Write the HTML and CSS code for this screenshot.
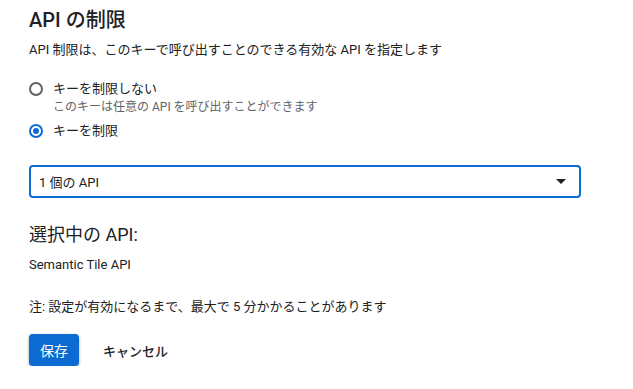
FILE: index.html
```html
<!DOCTYPE html>
<html lang="ja">
<head>
  <meta charset="UTF-8" />
  <meta name="viewport" content="width=device-width, initial-scale=1" />
  <title>API の制限</title>
  <link rel="stylesheet" href="styles.css">
</head>
<body>

  <div class="panel">
    <h1 class="title">API の制限</h1>
    <p class="desc">API 制限は、このキーで呼び出すことのできる有効な API を指定します</p>

    <div class="radio-group">
      <label class="radio">
        <span class="radio-dot"></span>
        <span class="radio-label">キーを制限しない</span>
      </label>
      <div class="radio-hint">このキーは任意の API を呼び出すことができます</div>
      <label class="radio checked">
        <span class="radio-dot"></span>
        <span class="radio-label">キーを制限</span>
      </label>
    </div>

    <div class="select">
      <span class="select-value">1 個の API</span>
      <span class="select-arrow"></span>
    </div>

    <h2 class="subtitle">選択中の API:</h2>
    <p class="api-name">Semantic Tile API</p>

    <p class="note">注: 設定が有効になるまで、最大で 5 分かかることがあります</p>

    <div class="actions">
      <button class="btn-save">保存</button>
      <button class="btn-cancel">キャンセル</button>
    </div>
  </div>

</body>
</html>
```

FILE: styles.css
```css
* {
  margin: 0;
  padding: 0;
  box-sizing: border-box;
}

html, body {
  background: #fff;
  font-family: Roboto, "Noto Sans CJK JP", sans-serif;
  color: #202124;
}

.panel {
  padding: 8px 0 0 29px;
  width: 581px;
}

.title {
  font-size: 20px;
  font-weight: 500;
  line-height: 24px;
}

.desc {
  margin-top: 8px;
  font-size: 13px;
  line-height: 20px;
}

.radio-group {
  margin-top: 19px;
  display: flex;
  flex-direction: column;
}

.radio {
  display: flex;
  align-items: center;
  gap: 10px;
  font-size: 13px;
  line-height: 20px;
}

.radio-dot {
  width: 14px;
  height: 14px;
  border: 2px solid #5f6368;
  border-radius: 50%;
  position: relative;
}

.radio.checked {
  margin-top: 6px;
}

.radio.checked .radio-dot {
  border-color: #0b6bd3;
}

.radio.checked .radio-dot::after {
  content: "";
  position: absolute;
  top: 2px;
  left: 2px;
  width: 6px;
  height: 6px;
  border-radius: 50%;
  background: #0b6bd3;
}

.radio-hint {
  padding-left: 24px;
  font-size: 12px;
  line-height: 16px;
  color: #5f6368;
}

.select {
  margin-top: 24px;
  height: 33px;
  border: 2px solid #0b6bd3;
  border-radius: 4px;
  display: flex;
  align-items: center;
  justify-content: space-between;
  padding: 0 13px 0 8px;
  font-size: 13px;
}

.select-arrow {
  width: 0;
  height: 0;
  border-left: 5px solid transparent;
  border-right: 5px solid transparent;
  border-top: 5px solid #202124;
}

.subtitle {
  margin-top: 25px;
  font-size: 18px;
  font-weight: 400;
  line-height: 24px;
}

.api-name {
  margin-top: 8px;
  font-size: 13px;
  line-height: 20px;
}

.note {
  margin-top: 22px;
  font-size: 13px;
  line-height: 20px;
}

.actions {
  margin-top: 17px;
  display: flex;
  align-items: center;
  gap: 16px;
}

.btn-save {
  height: 32px;
  padding: 0 11px;
  border: none;
  border-radius: 4px;
  background: #0b6bd3;
  color: #fff;
  font-family: inherit;
  font-size: 14px;
  box-shadow: 0 1px 2px rgba(60, 64, 67, 0.3), 0 1px 3px 1px rgba(60, 64, 67, 0.15);
}

.btn-cancel {
  height: 32px;
  padding: 0 8px;
  border: none;
  background: transparent;
  color: #202124;
  font-family: inherit;
  font-size: 13px;
  font-weight: 500;
}
```
